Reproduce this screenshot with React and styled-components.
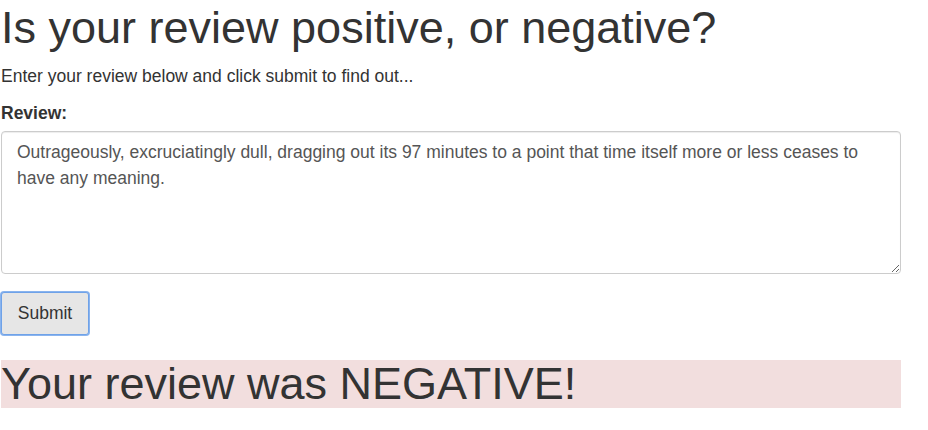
import React, { useState } from 'react';
import styled, { createGlobalStyle } from 'styled-components';

const GlobalStyle = createGlobalStyle`
  body {
    margin: 0;
    background: #fff;
    color: #333;
    font-family: 'Liberation Sans', Arial, sans-serif;
    font-size: 17.5px;
  }
`;

const Page = styled.div`
  width: 900px;
  padding-left: 1px;
`;

const Title = styled.h1`
  margin: 0;
  padding-top: 3px;
  font-size: 45px;
  font-weight: normal;
  line-height: 50px;
`;

const Lead = styled.p`
  margin: 12px 0 0;
  font-size: 17.5px;
  line-height: 22px;
`;

const Field = styled.div`
  display: flex;
  flex-direction: column;
  margin-top: 15px;
`;

const Label = styled.label`
  font-size: 17.5px;
  font-weight: bold;
  line-height: 22px;
  margin-bottom: 7px;
`;

const ReviewInput = styled.textarea`
  box-sizing: border-box;
  width: 900px;
  height: 143px;
  padding: 7px 15px;
  border: 1px solid #ccc;
  border-radius: 4px;
  box-shadow: inset 0 1px 1px rgba(0, 0, 0, 0.075);
  font-family: 'Liberation Sans', Arial, sans-serif;
  font-size: 17.5px;
  line-height: 26px;
  color: #555;
  resize: vertical;
  outline: none;
`;

const SubmitButton = styled.button`
  box-sizing: border-box;
  margin-top: 18px;
  width: 88px;
  height: 43px;
  padding: 0;
  background: #e6e6e6;
  border: 1px solid #6fa2e8;
  box-shadow: 0 0 0 1px #8ab4ee;
  border-radius: 3px;
  font-family: 'Liberation Sans', Arial, sans-serif;
  font-size: 17.5px;
  color: #333;
  cursor: pointer;
`;

const Result = styled.h2`
  margin: 25px 0 0;
  height: 48px;
  background: ${({ $negative }) => ($negative ? '#f2dede' : '#dff0d8')};
  font-size: 45px;
  font-weight: normal;
  line-height: 48px;
  color: #333;
`;

const App = () => {
  const [review, setReview] = useState(
    'Outrageously, excruciatingly dull, dragging out its 97 minutes to a point that time itself more or less ceases to have any meaning.'
  );

  return (
    <Page>
      <GlobalStyle />
      <Title>Is your review positive, or negative?</Title>
      <Lead>Enter your review below and click submit to find out...</Lead>
      <Field>
        <Label htmlFor="review">Review:</Label>
        <ReviewInput id="review" value={review} onChange={(e) => setReview(e.target.value)} />
      </Field>
      <SubmitButton>Submit</SubmitButton>
      <Result $negative>Your review was NEGATIVE!</Result>
    </Page>
  );
};

export default App;
